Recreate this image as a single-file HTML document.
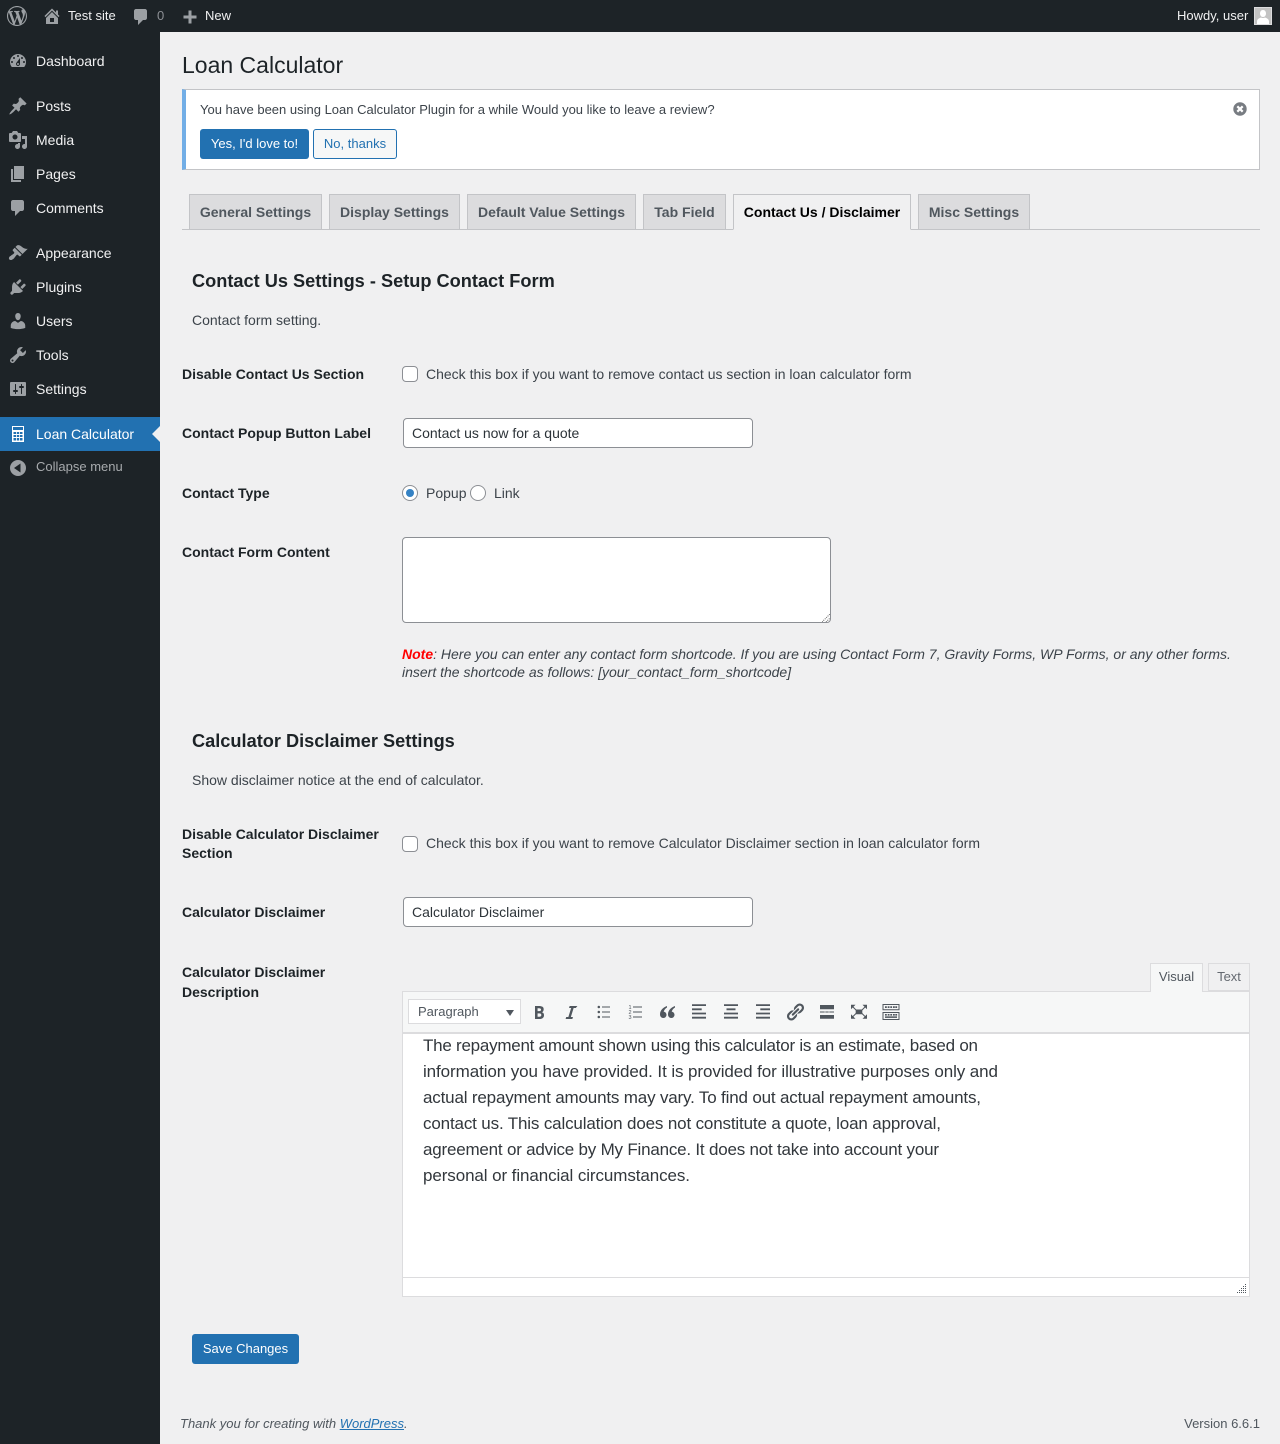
<!DOCTYPE html>
<html lang="en"><head><meta charset="utf-8"><title>Loan Calculator</title>
<style>
html,body{margin:0;padding:0}
body{width:1280px;height:1444px;position:relative;overflow:hidden;background:#f0f0f1;font-family:"Liberation Sans",sans-serif;font-size:14px;color:#3c434a}
.a,.t{position:absolute;box-sizing:border-box}
.t{white-space:nowrap;line-height:18px}
.m{color:#f0f0f1}
.ab{font-size:13px;color:#f0f0f1}
.l{font-weight:bold;color:#1d2327;font-size:14px}
svg.i{position:absolute;width:20px;height:20px;fill:#9ca0a4}
svg.e{position:absolute;width:20px;height:20px;fill:#50575e}
.tab{position:absolute;top:194px;height:36px;box-sizing:border-box;background:#dcdcde;border:1px solid #c3c4c7;font-weight:bold;color:#50575e;line-height:34px;text-align:center;white-space:nowrap}
.in{position:absolute;box-sizing:border-box;background:#fff;border:1px solid #8c8f94;border-radius:4px;height:30px;width:350px;left:403px;padding-left:8px;line-height:28px;color:#2c3338}
.cb{position:absolute;box-sizing:border-box;width:16px;height:16px;background:#fff;border:1px solid #8c8f94;border-radius:4px}
.r{border-radius:50%}
a{color:#2271b1}
</style></head><body>

<div class="a" style="left:0;top:0;width:1280px;height:32px;background:#1d2327"></div>
<div class="a" style="left:0;top:0;width:160px;height:1444px;background:#1d2327"></div>

<svg class="i" viewBox="0 0 20 20" style="left:7px;top:6px"><path d="M20 10c0-5.51-4.49-10-10-10C4.48 0 0 4.49 0 10c0 5.52 4.48 10 10 10 5.51 0 10-4.48 10-10zM7.78 15.37L4.37 6.22c.55-.02 1.17-.08 1.17-.08.5-.06.44-1.13-.06-1.11 0 0-1.45.11-2.37.11-.18 0-.37 0-.58-.01C4.12 2.69 6.87 1.11 10 1.11c2.33 0 4.45.87 6.05 2.34-.68-.11-1.65.39-1.65 1.58 0 .74.45 1.36.9 2.1.35.61.55 1.36.55 2.46 0 1.49-1.4 5-1.4 5l-3.03-8.37c.54-.02.82-.17.82-.17.5-.05.44-1.25-.06-1.22 0 0-1.44.12-2.38.12-.87 0-2.33-.12-2.33-.12-.5-.03-.56 1.2-.06 1.22l.92.08 1.26 3.41zM17.41 10c.24-.64.74-1.87.43-4.25.7 1.29 1.05 2.71 1.05 4.25 0 3.29-1.73 6.24-4.4 7.78.97-2.59 1.94-5.2 2.92-7.78zM6.1 18.09C3.12 16.65 1.11 13.53 1.11 10c0-1.3.23-2.48.72-3.59C3.25 10.3 4.67 14.2 6.1 18.09zm4.03-6.63l2.58 6.98c-.86.29-1.76.45-2.71.45-.79 0-1.57-.11-2.29-.33.81-2.38 1.62-4.74 2.42-7.1z"/></svg>
<svg class="i" viewBox="0 0 20 20" style="left:42px;top:6px"><path d="M16 8.5l1.53 1.53-1.06 1.06L10 4.62l-6.47 6.47-1.06-1.06L10 2.5l4 4v-2h2v4zm-6-2.46l6 5.99V18H4v-6.03zm2 5.96H8v4h4v-4z"/></svg>
<div class="t ab" style="left:68px;top:7px">Test site</div>
<svg class="i" viewBox="0 0 20 20" style="left:131px;top:7px"><path d="M5 2h9c1.100 0 2 .9 2 2v7c0 1.100-.9 2-2 2h-2l-5 5v-5H5c-1.100 0-2-.9-2-2V4c0-1.100.9-2 2-2z"/></svg>
<div class="t ab" style="left:157px;top:7px;color:#8c8f94">0</div>
<svg class="i" viewBox="0 0 20 20" style="left:179.500px;top:6.500px"><path d="M16.500 8.500v3h-5v5h-3v-5h-5v-3h5v-5h3v5h5z"/></svg>
<div class="t ab" style="left:205px;top:7px">New</div>
<div class="t ab" style="left:1177px;top:7px">Howdy, user</div>
<svg class="a" viewBox="0 0 18 18" style="left:1254px;top:7px;width:18px;height:18px"><rect width="18" height="18" fill="#dcdcde"/><rect x="1" y="1" width="16" height="16" fill="#c3c3c3"/><path d="M9 3c2 0 3 1.700 3 3.500S11 10 9 10 6 8.300 6 6.500 7 3 9 3zM3 17v-2.500C3 12 5.500 11 7 10.500c1 .7 3 .7 4 0 1.500.5 4 1.500 4 4V17z" fill="#fff"/></svg>

<svg class="i" viewBox="0 0 20 20" style="left:8px;top:51px"><path d="M3.760 16h12.480c1.100-1.370 1.760-3.110 1.760-5 0-4.420-3.580-8-8-8s-8 3.580-8 8c0 1.890.660 3.630 1.760 5zM10 4c.550 0 1 .450 1 1s-.450 1-1 1-1-.450-1-1 .450-1 1-1zM6 6c.550 0 1 .450 1 1s-.450 1-1 1-1-.450-1-1 .450-1 1-1zm8 0c.550 0 1 .450 1 1s-.450 1-1 1-1-.450-1-1 .450-1 1-1zm-5.370 5.550L12 7v6c0 1.100-.9 2-2 2s-2-.9-2-2c0-.570.240-1.080.630-1.450zM4 10c.550 0 1 .450 1 1s-.450 1-1 1-1-.450-1-1 .450-1 1-1zm12 0c.550 0 1 .450 1 1s-.450 1-1 1-1-.450-1-1 .450-1 1-1zm-5 3c0-.550-.450-1-1-1s-1 .450-1 1 .450 1 1 1 1-.450 1-1z"/></svg>
<div class="t m" style="left:36px;top:52px">Dashboard</div>
<svg class="i" viewBox="0 0 20 20" style="left:8px;top:96px"><path d="M10.440 3.020l1.820-1.820 6.360 6.350-1.830 1.820c-1.050-.680-2.480-.570-3.410.360l-.750.750c-.920.930-1.040 2.350-.350 3.410l-1.830 1.820-2.410-2.410-2.800 2.790c-.420.420-3.380 2.710-3.800 2.290s1.860-3.390 2.280-3.810l2.790-2.790L4.100 9.360l1.830-1.820c1.050.690 2.480.570 3.400-.360l.750-.750c.930-.920 1.050-2.350.360-3.410z"/></svg>
<div class="t m" style="left:36px;top:97px">Posts</div>
<svg class="i" viewBox="0 0 20 20" style="left:8px;top:130px"><path d="M13 11V4c0-.550-.450-1-1-1h-1.670L9 1H5L3.670 3H2c-.550 0-1 .450-1 1v7c0 .550.450 1 1 1h10c.550 0 1-.450 1-1zM7 4.500c1.380 0 2.500 1.120 2.500 2.500S8.380 9.500 7 9.500 4.500 8.380 4.500 7 5.620 4.500 7 4.500zM14 6h5v10.500c0 1.380-1.120 2.500-2.500 2.500S14 17.880 14 16.500s1.120-2.500 2.500-2.500c.170 0 .340.020.5.050V9h-3V6zm-4 8.050V13h2v3.500c0 1.380-1.120 2.500-2.500 2.500S7 17.880 7 16.500 8.120 14 9.500 14c.170 0 .340.020.5.050z"/></svg>
<div class="t m" style="left:36px;top:131px">Media</div>
<svg class="i" viewBox="0 0 20 20" style="left:8px;top:164px"><path d="M6 15V2h10v13H6zm-1 1h8v2H3V5h2v11z"/></svg>
<div class="t m" style="left:36px;top:165px">Pages</div>
<svg class="i" viewBox="0 0 20 20" style="left:8px;top:198px"><path d="M5 2h9c1.100 0 2 .9 2 2v7c0 1.100-.9 2-2 2h-2l-5 5v-5H5c-1.100 0-2-.9-2-2V4c0-1.100.9-2 2-2z"/></svg>
<div class="t m" style="left:36px;top:199px">Comments</div>
<svg class="i" viewBox="0 0 20 20" style="left:8px;top:243px"><path d="M14.480 11.060L7.410 3.990l1.500-1.500c.5-.560 2.300-.470 3.510.320 1.210.8 1.430 1.280 2.910 2.100 1.180.640 2.450 1.260 4.450.850zm-.710.710L6.700 4.700 4.930 6.470c-.390.390-.390 1.020 0 1.410l1.060 1.060c.390.390.390 1.030 0 1.420-.6.600-1.430 1.110-2.210 1.690-.350.260-.7.530-1.010.840C1.430 13.230.190 15.350 1.400 16.560c1.210 1.210 3.330-.040 4.680-1.370.310-.310.580-.660.840-1.010.580-.780 1.090-1.610 1.690-2.210.390-.390 1.030-.390 1.420 0l1.060 1.060c.390.390 1.020.390 1.410 0z"/></svg>
<div class="t m" style="left:36px;top:244px">Appearance</div>
<svg class="i" viewBox="0 0 20 20" style="left:8px;top:277px"><path d="M13.110 4.360L9.870 7.600 8 5.730l3.240-3.240c.350-.340 1.050-.2 1.560.320.520.510.660 1.210.310 1.550zm-8 1.770l.910-1.120 9.010 9.010-1.190.840c-.710.710-2.630 1.160-3.820 1.160H6.140L4.900 17.260c-.590.590-1.540.590-2.120 0-.590-.580-.590-1.530 0-2.120l1.240-1.240v-3.880c0-1.130.4-3.190 1.090-3.890zm7.260 3.970l3.240-3.240c.340-.350 1.040-.210 1.550.310.520.510.660 1.210.310 1.550l-3.240 3.250z"/></svg>
<div class="t m" style="left:36px;top:278px">Plugins</div>
<svg class="i" viewBox="0 0 20 20" style="left:8px;top:311px"><path d="M10 9.250c-2.270 0-2.730-3.440-2.730-3.440C7 4.020 7.820 2 9.970 2c2.160 0 2.980 2.020 2.710 3.810 0 0-.410 3.440-2.680 3.440zm0 2.570L12.720 10c2.390 0 4.520 2.330 4.520 4.530v2.490s-3.650 1.130-7.240 1.130c-3.650 0-7.240-1.130-7.240-1.130v-2.490c0-2.250 1.940-4.480 4.470-4.480z"/></svg>
<div class="t m" style="left:36px;top:312px">Users</div>
<svg class="i" viewBox="0 0 20 20" style="left:8px;top:345px"><path d="M16.680 9.770c-1.340 1.340-3.300 1.670-4.950.990l-5.410 6.520c-.990.990-2.590.990-3.580 0s-.990-2.590 0-3.570l6.520-5.420c-.680-1.650-.350-3.610.990-4.950 1.280-1.280 3.120-1.620 4.720-1.060l-2.890 2.890 2.820 2.820 2.860-2.870c.530 1.580.180 3.390-1.080 4.650zM3.810 16.210c.4.390 1.040.390 1.430 0 .4-.4.4-1.040 0-1.430-.390-.4-1.030-.4-1.430 0-.390.390-.390 1.030 0 1.430z"/></svg>
<div class="t m" style="left:36px;top:346px">Tools</div>
<svg class="i" viewBox="0 0 20 20" style="left:8px;top:379px"><path d="M18 16V4c0-.550-.450-1-1-1H3c-.550 0-1 .450-1 1v12c0 .550.450 1 1 1h14c.550 0 1-.450 1-1zM8 11h1c.550 0 1 .450 1 1s-.450 1-1 1H8v1.500c0 .280-.220.5-.5.5s-.5-.220-.5-.5V13H6c-.550 0-1-.450-1-1s.450-1 1-1h1V5.500c0-.280.220-.5.5-.5s.5.220.5.5V11zm5-2h-1c-.550 0-1-.450-1-1s.450-1 1-1h1V5.500c0-.280.220-.5.5-.5s.5.220.5.5V7h1c.550 0 1 .450 1 1s-.450 1-1 1h-1v5.500c0 .280-.220.5-.5.5s-.5-.220-.5-.5V9z"/></svg>
<div class="t m" style="left:36px;top:380px">Settings</div>

<div class="a" style="left:0;top:417px;width:160px;height:34px;background:#2271b1"></div>
<svg class="a" viewBox="0 0 12 16" style="left:12px;top:426px;width:12px;height:16px"><path fill="#fff" fill-rule="evenodd" d="M0 0h12v16H0zM1 1v3h10V1zM1.500 6v2h2.500V6zm3.300 0v2h2.400V6zm3.200 0v2h2.500V6zM1.500 9v2h2.500V9zm3.300 0v2h2.400V9zm3.200 0v2h2.500V9zM1.500 12v2.500h2.500V12zm3.300 0v2.500h2.400V12zm3.200 0v2.500h2.500V12z"/></svg>
<div class="t" style="left:36px;top:425px;color:#fff">Loan Calculator</div>
<div class="a" style="left:152px;top:426px;width:0;height:0;border-top:8px solid transparent;border-bottom:8px solid transparent;border-right:8px solid #f0f0f1"></div>
<svg class="a" viewBox="0 0 20 20" style="left:8px;top:458px;width:20px;height:20px"><path fill="#9ca0a4" fill-rule="evenodd" d="M10 2a8 8 0 1 1 0 16 8 8 0 0 1 0-16zM12.500 5.500L6 10l6.500 4.500z"/></svg>
<div class="t" style="left:36px;top:458px;font-size:13px;color:#a7aaad">Collapse menu</div>

<div class="t" style="left:182px;top:50px;font-size:23px;line-height:30px;color:#1d2327">Loan Calculator</div>
<div class="a" style="left:182px;top:89px;width:1078px;height:81px;background:#fff;border:1px solid #c3c4c7;border-left:4px solid #72aee6"></div>
<div class="t" style="left:200px;top:101px;font-size:13px">You have been using Loan Calculator Plugin for a while Would you like to leave a review?</div>
<svg class="a" viewBox="0 0 14 14" style="left:1232.500px;top:101.700px;width:14px;height:14px"><circle cx="7" cy="7" r="6.700" fill="#787c82"/><path d="M4.300 4.300l5.400 5.400m0-5.400l-5.400 5.400" stroke="#fff" stroke-width="2.200" fill="none"/></svg>
<div class="a" style="left:200px;top:129px;width:109px;height:30px;background:#2271b1;border-radius:3px;color:#fff;font-size:13px;line-height:30px;text-align:center">Yes, I'd love to!</div>
<div class="a" style="left:313px;top:129px;width:84px;height:30px;background:#f6f7f7;border:1px solid #2271b1;border-radius:3px;color:#2271b1;font-size:13px;line-height:28px;text-align:center">No, thanks</div>

<div class="a" style="left:182px;top:229px;width:1078px;height:1px;background:#c3c4c7"></div>
<div class="tab" style="left:189px;width:133px">General Settings</div>
<div class="tab" style="left:329px;width:131px">Display Settings</div>
<div class="tab" style="left:467px;width:169px">Default Value Settings</div>
<div class="tab" style="left:643px;width:83px">Tab Field</div>
<div class="tab" style="left:733px;width:178px;background:#f0f0f1;color:#000;border-bottom-color:#f0f0f1">Contact Us / Disclaimer</div>
<div class="tab" style="left:918px;width:112px">Misc Settings</div>

<div class="t" style="left:192px;top:270px;font-size:18.200px;line-height:22px;font-weight:bold;color:#1d2327">Contact Us Settings - Setup Contact Form</div>
<div class="t" style="left:192px;top:311px">Contact form setting.</div>

<div class="t l" style="left:182px;top:365px">Disable Contact Us Section</div>
<div class="cb" style="left:402px;top:366px"></div>
<div class="t" style="left:426px;top:365px">Check this box if you want to remove contact us section in loan calculator form</div>

<div class="t l" style="left:182px;top:424px">Contact Popup Button Label</div>
<div class="in" style="top:418px">Contact us now for a quote</div>

<div class="t l" style="left:182px;top:484px">Contact Type</div>
<div class="cb r" style="left:402px;top:485px"></div>
<div class="a" style="left:406px;top:489px;width:8px;height:8px;border-radius:50%;background:#3582c4"></div>
<div class="t" style="left:426px;top:484px">Popup</div>
<div class="cb r" style="left:470px;top:485px"></div>
<div class="t" style="left:494px;top:484px">Link</div>

<div class="t l" style="left:182px;top:543px">Contact Form Content</div>
<div class="a" style="left:402px;top:537px;width:429px;height:86px;background:#fff;border:1px solid #8c8f94;border-radius:4px"></div>
<svg class="a" viewBox="0 0 8 8" style="left:822px;top:614px;width:8px;height:8px"><path d="M0 8L8 0M4 8l4-4" stroke="#666" stroke-width="1" stroke-dasharray="1 1" fill="none"/></svg>

<div class="t" style="left:402px;top:645px;font-style:italic"><b style="color:#f00">Note</b>: Here you can enter any contact form shortcode. If you are using Contact Form 7, Gravity Forms, WP Forms, or any other forms.</div>
<div class="t" style="left:402px;top:663px;font-style:italic">insert the shortcode as follows: [your_contact_form_shortcode]</div>

<div class="t" style="left:192px;top:730px;font-size:18.200px;line-height:22px;font-weight:bold;color:#1d2327">Calculator Disclaimer Settings</div>
<div class="t" style="left:192px;top:771px">Show disclaimer notice at the end of calculator.</div>

<div class="t l" style="left:182px;top:825px">Disable Calculator Disclaimer</div>
<div class="t l" style="left:182px;top:844px">Section</div>
<div class="cb" style="left:402px;top:836px"></div>
<div class="t" style="left:426px;top:834px">Check this box if you want to remove Calculator Disclaimer section in loan calculator form</div>

<div class="t l" style="left:182px;top:903px">Calculator Disclaimer</div>
<div class="in" style="top:897px">Calculator Disclaimer</div>

<div class="t l" style="left:182px;top:963px">Calculator Disclaimer</div>
<div class="t l" style="left:182px;top:983px">Description</div>

<div class="a" style="left:1208px;top:963px;width:42px;height:28px;background:#f0f0f1;border:1px solid #dcdcde;font-size:13px;line-height:26px;text-align:center;color:#646970">Text</div>
<div class="a" style="left:402px;top:991px;width:848px;height:306px;background:#fff;border:1px solid #dcdcde"></div>
<div class="a" style="left:403px;top:992px;width:846px;height:42px;background:#f6f7f7;border-bottom:2px solid #dcdcde"></div>
<div class="a" style="left:1150px;top:963px;width:53px;height:29px;background:#f6f7f7;border:1px solid #dcdcde;border-bottom:0;font-size:13px;line-height:26px;text-align:center;color:#50575e">Visual</div>
<div class="a" style="left:408px;top:999px;width:113px;height:25px;background:#fff;border:1px solid #dcdcde;font-size:13px;line-height:23px;padding-left:9px;color:#50575e">Paragraph</div>
<div class="a" style="left:506px;top:1010px;width:0;height:0;border-left:4px solid transparent;border-right:4px solid transparent;border-top:6px solid #50575e"></div>

<svg class="e" viewBox="0 0 20 20" style="left:529px;top:1002px"><path fill-rule="evenodd" d="M6 4v13h4.540c1.370 0 2.460-.330 3.260-1 .8-.660 1.200-1.580 1.200-2.770 0-.840-.170-1.510-.510-2.010s-.9-.850-1.670-1.030v-.090c.570-.1 1.020-.4 1.360-.9s.510-1.130.510-1.910c0-1.140-.390-1.980-1.170-2.500C12.750 4.260 11.500 4 9.780 4H6zm2.570 5.150V6.260h1.360c.730 0 1.270.110 1.610.320.340.220.510.580.510 1.070 0 .540-.160.920-.470 1.150s-.820.350-1.510.350h-.5zm0 2.190h1.600c1.440 0 2.160.530 2.160 1.610 0 .6-.170 1.050-.510 1.340s-.860.430-1.570.430H8.570v-3.380z"/></svg>
<svg class="e" viewBox="0 0 20 20" style="left:561px;top:1002px"><path d="M14.780 6h-2.130l-2.800 9h2.120l-.620 2H4.600l.620-2h2.140l2.800-9H8.030l.620-2h7.760z"/></svg>
<svg class="e" viewBox="0 0 20 20" style="left:593px;top:1002px"><circle cx="5.800" cy="5" r="1.250"/><circle cx="5.800" cy="10" r="1.250"/><circle cx="5.800" cy="15" r="1.250"/><path d="M9 4.500h8v1H9zM9 9.500h8v1H9zM9 14.500h8v1H9z"/></svg>
<svg class="e" viewBox="0 0 20 20" style="left:625px;top:1002px"><path d="M8 4.500h9v1H8zM8 9.500h9v1H8zM8 14.500h9v1H8z"/><text x="3.500" y="7" font-size="5.500" font-family="Liberation Sans,sans-serif">1</text><text x="3.500" y="12" font-size="5.500" font-family="Liberation Sans,sans-serif">2</text><text x="3.500" y="17" font-size="5.500" font-family="Liberation Sans,sans-serif">3</text></svg>
<svg class="e" viewBox="0 0 20 20" style="left:657px;top:1002px"><path d="M10 4C6 5.500 3 8.500 3 12.200c0 2.300 1.400 3.800 3.300 3.800 1.800 0 3.200-1.400 3.200-3.200S8.200 9.700 6.700 9.700c.4-1.700 1.800-3.300 3.300-4.200zM18 4c-4 1.500-7 4.500-7 8.200 0 2.300 1.400 3.800 3.300 3.800 1.800 0 3.200-1.400 3.200-3.200s-1.300-3.100-2.800-3.100c.4-1.700 1.800-3.300 3.300-4.200z"/></svg>
<svg class="e" viewBox="0 0 20 20" style="left:689px;top:1002px"><path d="M3 2.200h14v1.800H3zM3 6.400h9.700v1.800H3zM3 10.600h14v1.800H3zM3 14.800h14v1.800H3z"/></svg>
<svg class="e" viewBox="0 0 20 20" style="left:721px;top:1002px"><path d="M3 2.200h14v1.800H3zM5.500 6.400h9v1.800h-9zM3 10.600h14v1.800H3zM3 14.800h14v1.800H3z"/></svg>
<svg class="e" viewBox="0 0 20 20" style="left:753px;top:1002px"><path d="M3 2.200h14v1.800H3zM7.300 6.400H17v1.800H7.300zM3 10.600h14v1.800H3zM3 14.800h14v1.800H3z"/></svg>
<svg class="e" viewBox="0 0 20 20" style="left:785px;top:1002px"><path d="M17.740 2.760c1.680 1.690 1.680 4.410 0 6.100l-1.530 1.520c-1.120 1.120-2.700 1.470-4.140 1.090l2.620-2.610.760-.770.760-.760c.840-.840.840-2.200 0-3.040-.840-.850-2.200-.850-3.040 0l-.770.760-3.380 3.380c-.370-1.440-.020-3.020 1.100-4.140l1.520-1.530c1.690-1.680 4.420-1.680 6.100 0zM8.590 13.430l5.340-5.340c.420-.420.420-1.100 0-1.520-.440-.430-1.130-.390-1.530 0l-5.330 5.340c-.420.420-.420 1.100 0 1.520.440.430 1.130.390 1.520 0zm-.760 2.290l4.140-4.150c.380 1.440.030 3.020-1.090 4.140l-1.520 1.530c-1.690 1.680-4.410 1.680-6.100 0-1.680-1.680-1.680-4.420 0-6.100l1.530-1.520c1.120-1.120 2.700-1.470 4.140-1.100l-4.140 4.150c-.850.840-.850 2.200 0 3.050.840.840 2.200.840 3.040 0z"/></svg>
<svg class="e" viewBox="0 0 20 20" style="left:817px;top:1002px"><path d="M3 3h14v4.300H3zM3 9.500h4.700v1H3zM8.300 9.500h3.400v1H8.300zM12.300 9.500H17v1h-4.700zM3 13h14v3.700H3z"/></svg>
<svg class="e" viewBox="0 0 20 20" style="left:849px;top:1002px"><path d="M2 2.700h4.500L2 7.200zM18 2.700h-4.500L18 7.200zM2 16.800h4.500L2 12.300zM18 16.800h-4.500l4.500-4.500zM6.700 7.500h6.600v4.800H6.700z"/><path d="M3.500 4.500l4 4M16.500 4.500l-4 4M3.500 15l4-4M16.500 15l-4-4" stroke="#50575e" stroke-width="1" fill="none"/></svg>
<svg class="e" viewBox="0 0 20 20" style="left:881px;top:1002px"><path fill-rule="evenodd" d="M1.500 2h17v6.200h-17zM2.500 3v4.200h15V3zM1.500 10h17v8h-17zM2.500 11v6h15v-6z"/><path d="M4 4.300h1.800v1.700H4zM6.700 4.300h1.800v1.700H6.700zM9.300 4.300h1.800v1.700H9.300zM12 4.300h1.800v1.700H12zM14.300 4.300h1.800v1.700h-1.800zM4 12h1.800v1.600H4zM6.700 12h1.800v1.600H6.700zM9.300 12h1.800v1.600H9.300zM12 12h1.800v1.600H12zM14.300 12h1.800v1.600h-1.800zM4 14.400h12v1.500H4z"/></svg>

<svg class="a" viewBox="0 0 600 170" style="left:403px;top:1032px;width:600px;height:170px" font-family="Liberation Sans,sans-serif" font-size="17" fill="#32373c">
<text x="20" y="19" textLength="555" lengthAdjust="spacing">The repayment amount shown using this calculator is an estimate, based on</text>
<text x="20" y="45" textLength="575" lengthAdjust="spacing">information you have provided. It is provided for illustrative purposes only and</text>
<text x="20" y="71" textLength="558" lengthAdjust="spacing">actual repayment amounts may vary. To find out actual repayment amounts,</text>
<text x="20" y="97" textLength="518" lengthAdjust="spacing">contact us. This calculation does not constitute a quote, loan approval,</text>
<text x="20" y="123" textLength="516" lengthAdjust="spacing">agreement or advice by My Finance. It does not take into account your</text>
<text x="20" y="149" textLength="267" lengthAdjust="spacing">personal or financial circumstances.</text>
</svg>

<div class="a" style="left:403px;top:1277px;width:846px;height:1px;background:#dcdcde"></div>
<svg class="a" viewBox="0 0 10 10" style="left:1237px;top:1284px;width:10px;height:10px" fill="#50575e"><path d="M8 0h1v1H8zM6 2h1v1H6zM8 2h1v1H8zM4 4h1v1H4zM6 4h1v1H6zM8 4h1v1H8zM2 6h1v1H2zM4 6h1v1H4zM6 6h1v1H6zM8 6h1v1H8zM0 8h1v1H0zM2 8h1v1H2zM4 8h1v1H4zM6 8h1v1H6zM8 8h1v1H8z"/></svg>

<div class="a" style="left:192px;top:1334px;width:107px;height:30px;background:#2271b1;border-radius:3px;color:#fff;font-size:13px;line-height:30px;text-align:center">Save Changes</div>

<div class="t" style="left:180px;top:1415px;font-size:13px;font-style:italic;color:#50575e">Thank you for creating with <a href="#">WordPress</a>.</div>
<div class="t" style="right:20px;top:1415px;font-size:13px;color:#50575e">Version 6.6.1</div>
</body></html>
